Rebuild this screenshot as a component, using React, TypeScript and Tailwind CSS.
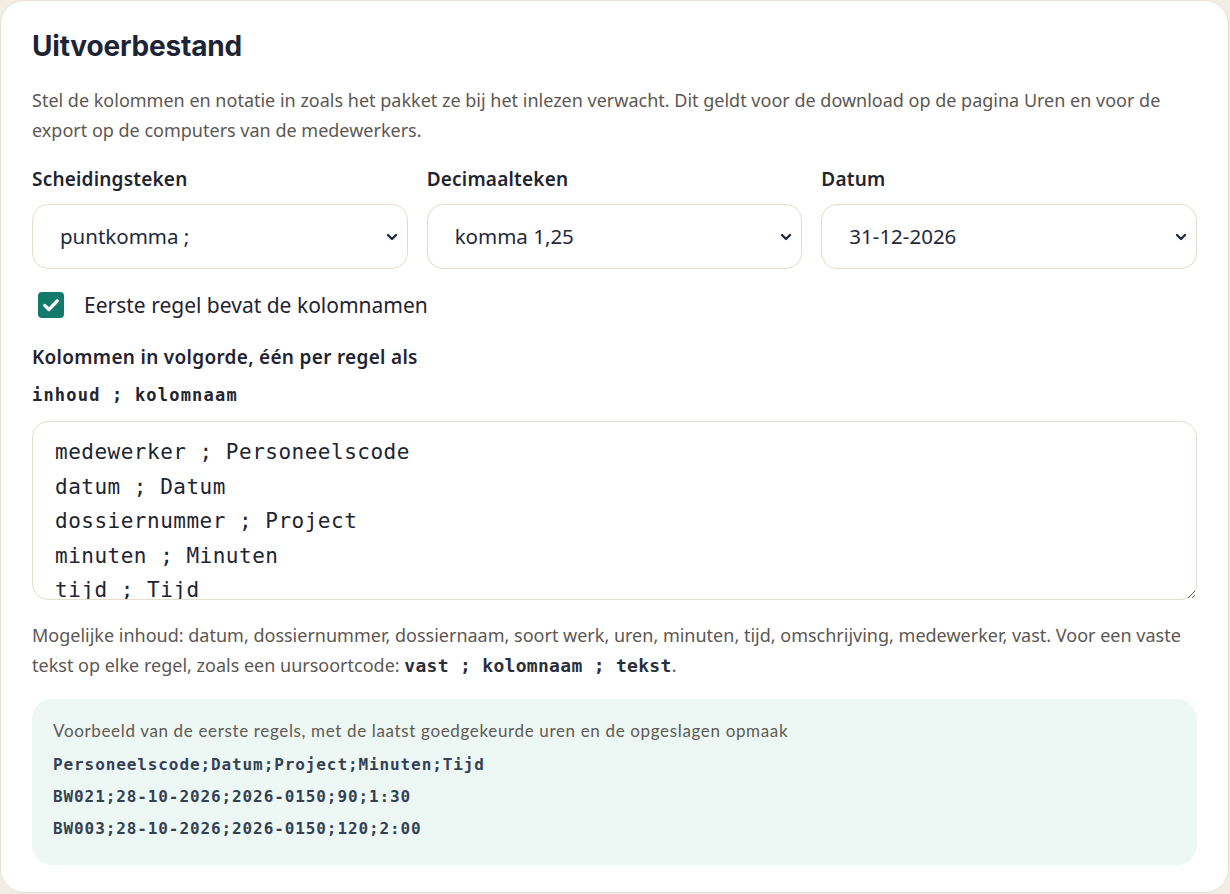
import { ChevronDown } from "lucide-react";

const sans = "font-['Noto_Sans',sans-serif]";
const mono = "font-['DejaVu_Sans_Mono',monospace]";

function Select({ label, value }: { label: string; value: string }) {
  return (
    <div className="flex flex-col">
      <label className="mb-3 text-[19px] font-semibold leading-[26px] tracking-[0.2px] text-[#1f2430]">{label}</label>
      <div className="relative">
        <select
          defaultValue={value}
          className="h-[65px] w-full appearance-none rounded-2xl border border-[#e6ddcd] bg-white pl-[27px] pr-10 text-[20.5px] text-[#1e293b] outline-none"
        >
          <option>{value}</option>
        </select>
        <ChevronDown
          size={16}
          strokeWidth={3.5}
          className="pointer-events-none absolute right-[8px] top-1/2 -translate-y-1/2 text-[#1e293b]"
        />
      </div>
    </div>
  );
}

export default function App() {
  const columns = [
    "medewerker ; Personeelscode",
    "datum ; Datum",
    "dossiernummer ; Project",
    "minuten ; Minuten",
    "tijd ; Tijd",
  ].join("\n");

  return (
    <div className="min-h-screen bg-[#f3eee5]">
      <div className={`${sans} w-[1229px] rounded-[24px] border border-[#e8e0d2] bg-white px-[31px] pb-[27px] pt-7`}>
        <h2 className="font-['Inter',sans-serif] text-[28px] font-bold leading-[34px] tracking-[-0.2px] text-[#1c2536]">
          Uitvoerbestand
        </h2>
        <p className="mt-[22px] text-[18px] leading-[30px] text-[#5c5752]">
          Stel de kolommen en notatie in zoals het pakket ze bij het inlezen verwacht. Dit geldt voor de download op de
          pagina Uren en voor de export op de computers van de medewerkers.
        </p>

        <div className="mt-[21px] grid grid-cols-3 gap-[19px]">
          <Select label="Scheidingsteken" value="puntkomma ;" />
          <Select label="Decimaalteken" value="komma 1,25" />
          <Select label="Datum" value="31-12-2026" />
        </div>

        <div className="mt-[22px] flex items-center gap-[20px] pl-[6px]">
          <span className="flex h-[26px] w-[26px] items-center justify-center rounded-[4px] bg-[#137a6b]">
            <svg viewBox="0 0 24 24" className="h-[20px] w-[20px]" fill="none" stroke="white" strokeWidth={4} strokeLinecap="round" strokeLinejoin="round">
              <path d="M4.5 12.5l5 5L19.5 7" />
            </svg>
          </span>
          <span className="text-[21px] leading-[28px] text-[#1f2430]">Eerste regel bevat de kolomnamen</span>
        </div>

        <p className="mt-[25px] text-[19px] font-semibold leading-[26px] tracking-[0.3px] text-[#1f2430]">
          Kolommen in volgorde, één per regel als
        </p>
        <p className={`${mono} mt-[13px] text-[17px] font-bold leading-[24px] tracking-[1.2px] text-[#1f2430]`}>
          inhoud ; kolomnaam
        </p>

        <textarea
          defaultValue={columns}
          spellCheck={false}
          className={`${mono} mt-[14px] block h-[179px] w-full resize-y overflow-hidden rounded-2xl border border-[#e6ddcd] bg-white px-[22px] pt-[13px] text-[21px] leading-[34.5px] tracking-[0.5px] text-[#1e2430] outline-none`}
        />

        <p className="mt-[20px] text-[18px] leading-[30px] text-[#5c5752]">
          Mogelijke inhoud: datum, dossiernummer, dossiernaam, soort werk, uren, minuten, tijd, omschrijving, medewerker,
          vast. Voor een vaste tekst op elke regel, zoals een uursoortcode:{" "}
          <code className={`${mono} text-[18px] font-bold leading-none tracking-[0.3px] text-[#2a2f3a]`}>vast ; kolomnaam ; tekst</code>.
        </p>

        <div className="mt-[19px] rounded-[20px] bg-[#edf7f3] px-[21px] pb-[20px] pt-[20px]">
          <p className="font-['Lato',sans-serif] text-[17px] leading-[24px] tracking-[0.65px] text-[#5f5a55]">
            Voorbeeld van de eerste regels, met de laatst goedgekeurde uren en de opgeslagen opmaak
          </p>
          <div className={`${mono} mt-[6px] text-[16px] font-bold leading-[32px] tracking-[0.9px] text-[#334155]`}>
            <div>Personeelscode;Datum;Project;Minuten;Tijd</div>
            <div>BW021;28-10-2026;2026-0150;90;1:30</div>
            <div>BW003;28-10-2026;2026-0150;120;2:00</div>
          </div>
        </div>
      </div>
    </div>
  );
}
